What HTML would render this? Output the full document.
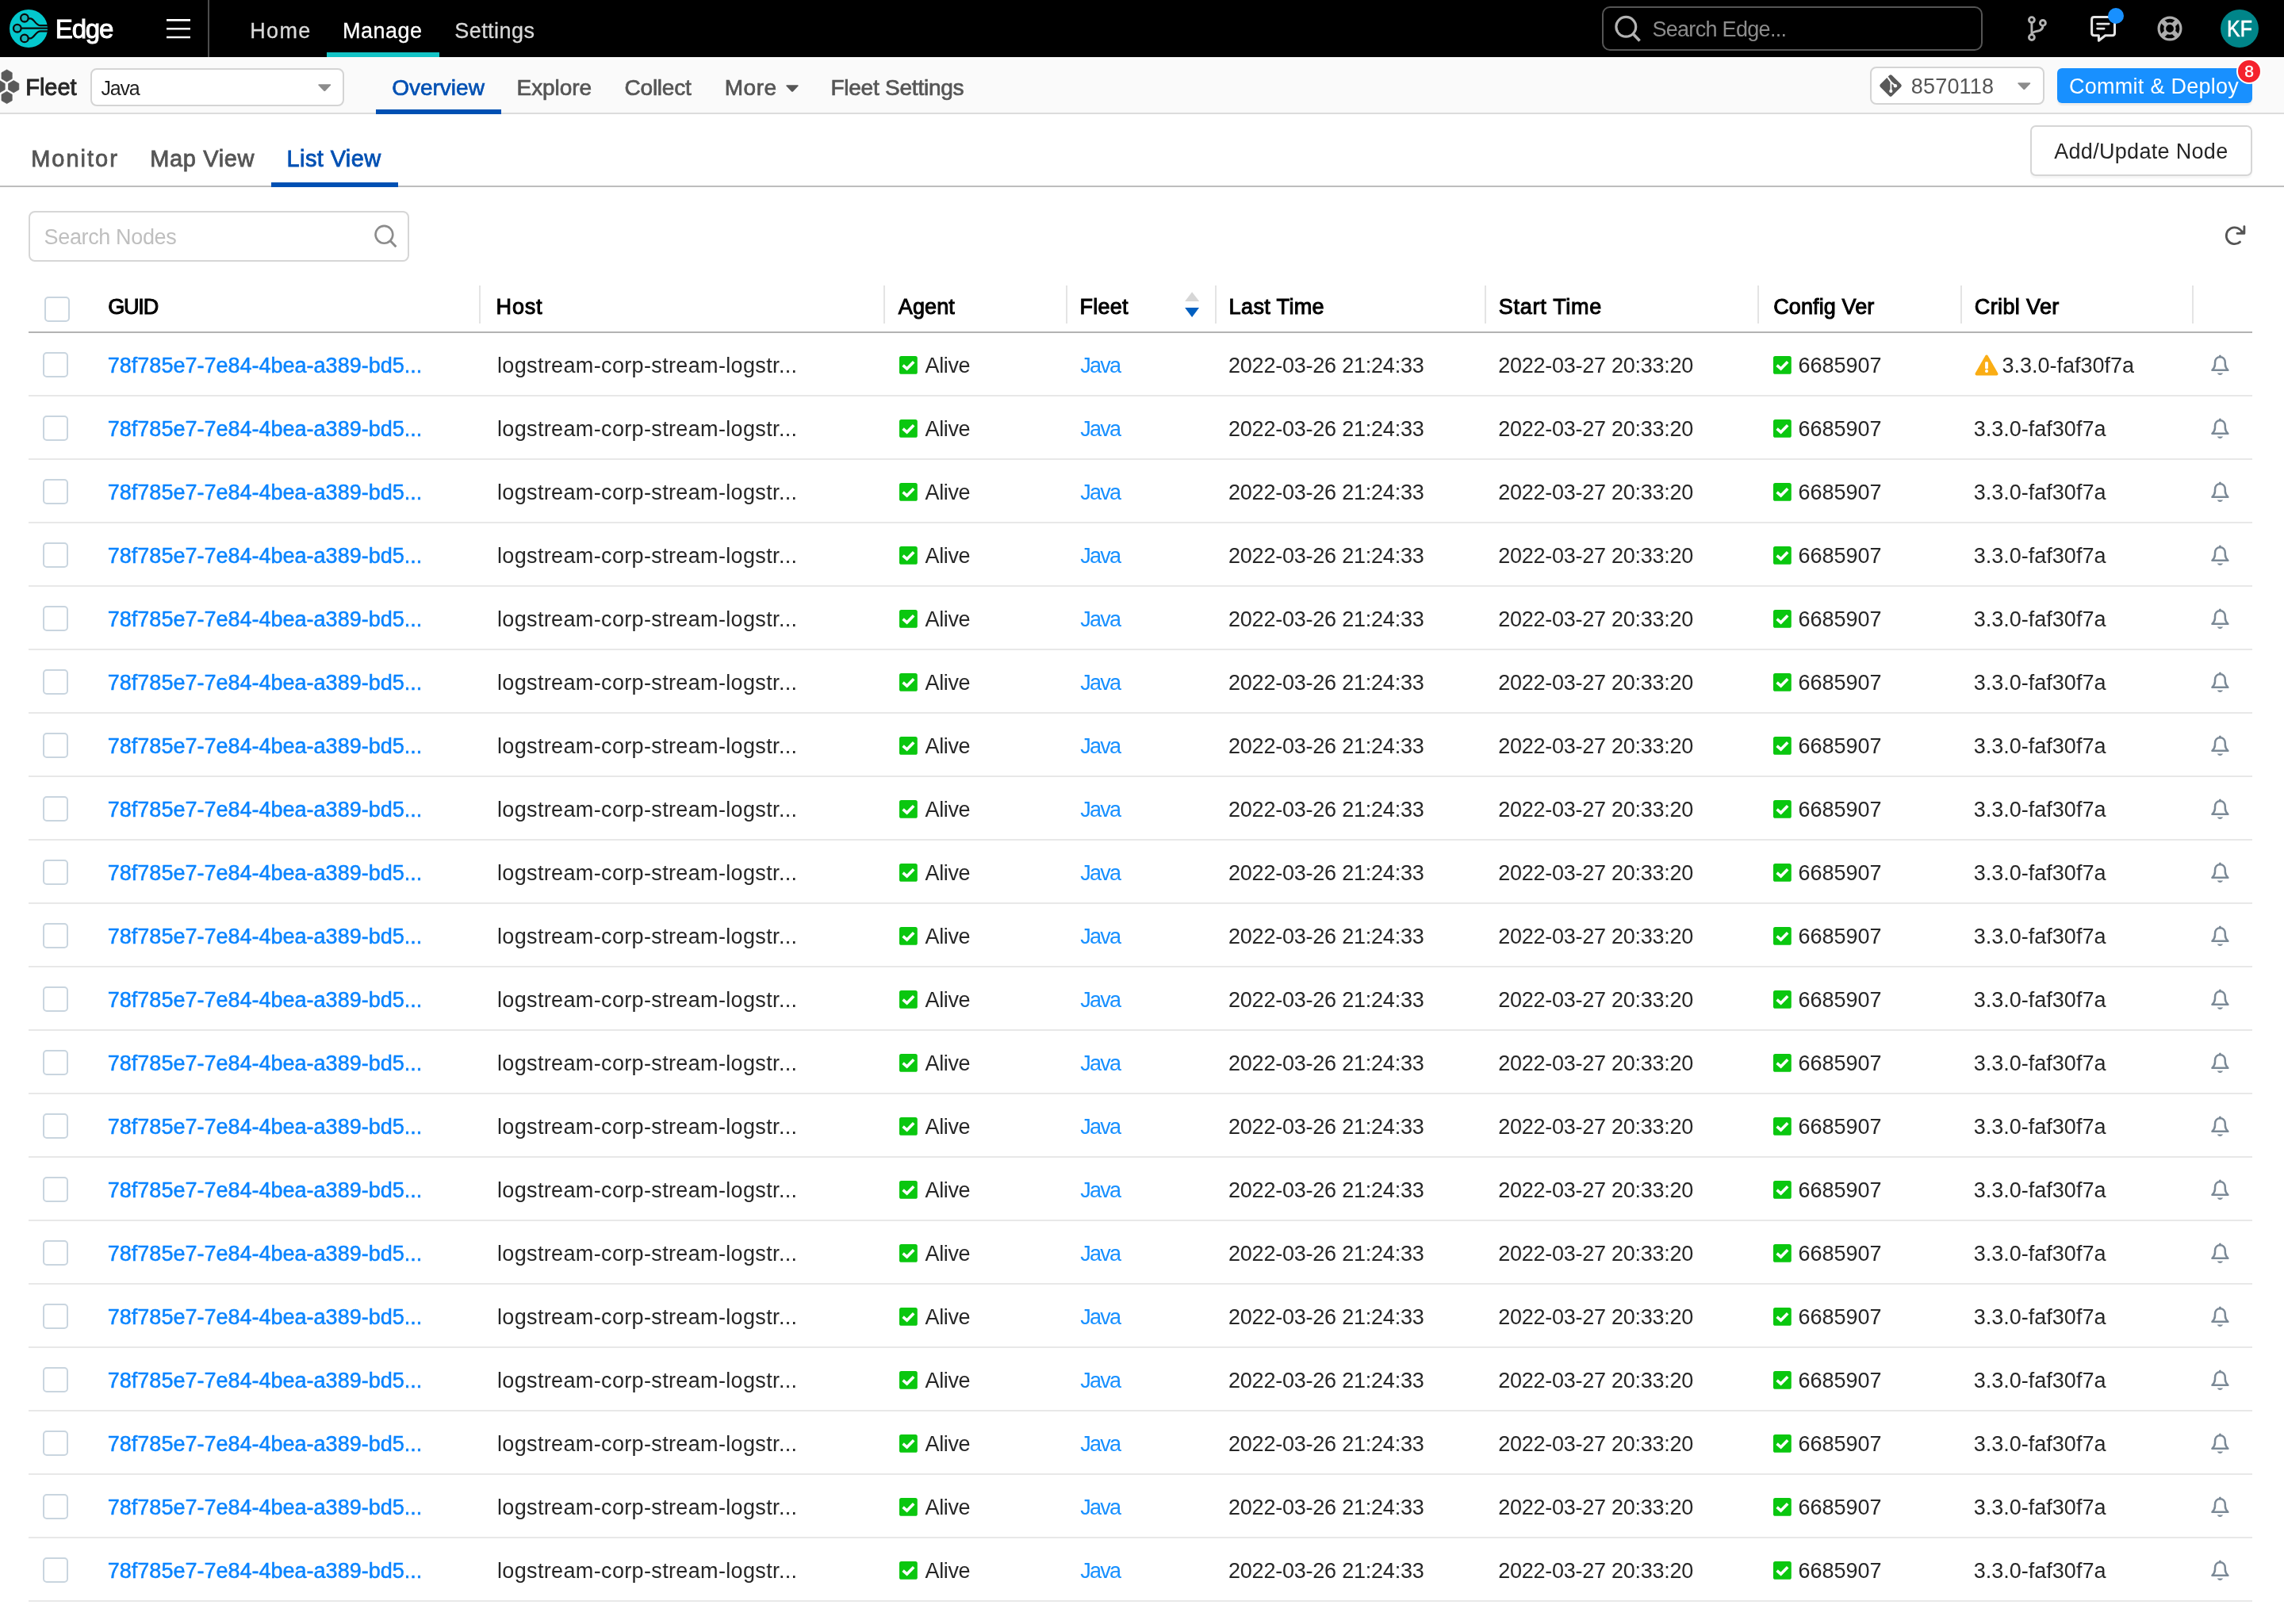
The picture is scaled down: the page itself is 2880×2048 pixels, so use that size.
<!DOCTYPE html>
<html lang="en"><head><meta charset="utf-8"><title>Edge - Fleet Java - List View</title>
<style>
html,body{margin:0;padding:0}
body{width:2880px;height:2048px;overflow:hidden;background:#fff;position:relative;font-family:"Liberation Sans",sans-serif;-webkit-font-smoothing:antialiased}
.a{position:absolute;display:block}
#topbar,#fleetbar,#tabs,#toolbar,#thead,.row{will-change:transform}
.t{position:absolute;white-space:nowrap;line-height:1;paint-order:stroke fill}
#topbar{left:0;top:0;width:2880px;height:72px;background:#000}
#fleetbar{left:0;top:72px;width:2880px;height:70px;background:#fafafa;border-bottom:2px solid #dcdcdc}
#tabs{left:0;top:144px;width:2880px;height:90px;background:#fff;border-bottom:2px solid #bdbdbd}
#toolbar{left:0;top:236px;width:2880px;height:104px}
#thead{left:36px;top:340px;width:2804px;height:78px;border-bottom:2px solid #b3b3b3}
.row{left:36px;width:2804px;height:78px;border-bottom:2px solid #e8e8e8}
.cb{width:28px;height:28px;border:2px solid #c9d5df;border-radius:5px;background:#fff}
.vd{width:2px;height:48px;top:20px;background:#e4e4e4}
.ul{height:6px}
</style></head><body>

<header id="topbar" class="a">
<svg class="a" style="left:12px;top:12px" width="48" height="48" viewBox="0 0 48 48">
<circle cx="24" cy="24" r="24" fill="#04c8cd"/>
<g fill="none" stroke="#0a0a0a" stroke-width="2.2" stroke-linecap="round">
<path d="M23.6 11.4H26.4C31 11.4 33 20.2 39 20.2H48"/>
<path d="M14.6 23.7H48"/>
<path d="M23.6 36.3H26.4C31 36.3 33 27.4 39 27.4H48"/>
</g>
<g fill="#18b4b8" stroke="#0a0a0a" stroke-width="2.3">
<circle cx="18.9" cy="10.7" r="4.8"/><circle cx="9.8" cy="23.7" r="4.8"/><circle cx="18.9" cy="36.4" r="4.8"/>
</g></svg>
<span class="t" id="t_edge" style="left:69.80px;top:20.37px;font-size:33px;color:#fff;letter-spacing:-1.167px;-webkit-text-stroke:1.0px #fff;">Edge</span>
<svg class="a" style="left:210px;top:23px" width="30" height="26" viewBox="0 0 30 26"><path d="M0 2.4H30M0 13.2H30M0 24H30" stroke="#fff" stroke-width="2.6" fill="none"/></svg>
<div class="a" style="left:262px;top:0;width:2px;height:72px;background:#4d4d4d"></div>
<nav>
<span class="t" id="t_home" style="left:315.20px;top:26.19px;font-size:27px;color:#d9d9d9;letter-spacing:1.366px;-webkit-text-stroke:0.3px #d9d9d9;">Home</span>
<span class="t" id="t_manage" style="left:432.00px;top:26.19px;font-size:27px;color:#fff;letter-spacing:0.500px;-webkit-text-stroke:0.3px #fff;">Manage</span>
<span class="t" id="t_settings" style="left:573.20px;top:26.19px;font-size:27px;color:#d9d9d9;letter-spacing:0.457px;-webkit-text-stroke:0.3px #d9d9d9;">Settings</span>
<div class="a ul" style="left:412px;top:66px;width:142px;background:#13c3c5"></div>
</nav>
<div class="a" style="left:2020px;top:8px;width:476px;height:52px;border:2px solid #555;border-radius:10px"></div>
<svg class="a" style="left:2034px;top:18px" width="38" height="38" viewBox="0 0 38 38"><circle cx="16.3" cy="15.8" r="12.4" fill="none" stroke="#b3b3b3" stroke-width="3.2"/><path d="M25 24.6L33.6 33.4" stroke="#b3b3b3" stroke-width="3.6" stroke-linecap="butt"/></svg>
<span class="t" id="t_searchedge" style="left:2083.40px;top:24.24px;font-size:27px;color:#8c8c8c;letter-spacing:-0.692px;">Search Edge...</span>
<svg class="a" style="left:2554px;top:18px" width="30" height="36" viewBox="0 0 30 36"><g fill="none" stroke="#b3b3b3" stroke-width="2.9">
<circle cx="7.9" cy="7.1" r="3.45"/><circle cx="7.9" cy="29.1" r="3.45"/><circle cx="21.9" cy="10.9" r="3.45"/>
<path d="M7.9 10.5V25.7"/><path d="M21.9 14.4C21.9 19.6 18.4 20.6 15 21.2S9 22 8 25"/></g></svg>
<svg class="a" style="left:2634px;top:18px" width="36" height="36" viewBox="0 0 36 36"><g fill="none" stroke="#e4e4e4" stroke-width="3" stroke-linejoin="round">
<path d="M6.6 3.5H29.6Q32.5 3.5 32.5 6.4V23.8Q32.5 26.7 29.6 26.7H20.6L12.4 33.2V26.7H6.6Q3.6 26.7 3.6 23.8V6.4Q3.6 3.5 6.6 3.5Z"/></g>
<path d="M10.6 12.1H25.2M10.6 18.1H19.2" stroke="#e4e4e4" stroke-width="2.7" stroke-linecap="round" fill="none"/></svg>
<div class="a" style="left:2657.6px;top:9.6px;width:20.4px;height:20.4px;border-radius:50%;background:#1890ff"></div>
<svg class="a" style="left:2719px;top:19px" width="34" height="34" viewBox="0 0 34 34"><g fill="none" stroke="#adadad">
<circle cx="17" cy="17" r="13.9" stroke-width="3.2"/><circle cx="17" cy="17" r="6.3" stroke-width="2.8"/>
<path d="M7.6 7.6L12.4 12.4M26.4 7.6L21.6 12.4M7.6 26.4L12.4 21.6M26.4 26.4L21.6 21.6" stroke-width="5.8"/></g></svg>
<div class="a" style="left:2800px;top:12px;width:48px;height:48px;border-radius:50%;background:#008589"></div>
<span class="t" id="t_kf" style="left:2808.00px;top:22.05px;font-size:29px;color:#fff;-webkit-text-stroke:0.6px #fff;transform:scaleX(0.86);transform-origin:0 50%;">KF</span>
</header>
<div id="fleetbar" class="a">
<svg class="a" style="left:0;top:14px" width="26" height="48" viewBox="0 0 26 48"><g fill="#595959" stroke="#595959" stroke-width="0.8" stroke-linejoin="round"><polygon points="8.60,1.90 15.18,5.70 15.18,13.30 8.60,17.10 2.02,13.30 2.02,5.70"/><polygon points="17.20,15.60 23.78,19.40 23.78,27.00 17.20,30.80 10.62,27.00 10.62,19.40"/><polygon points="-0.40,15.60 6.18,19.40 6.18,27.00 -0.40,30.80 -6.98,27.00 -6.98,19.40"/><polygon points="8.60,29.40 15.18,33.20 15.18,40.80 8.60,44.60 2.02,40.80 2.02,33.20"/></g></svg>
<span class="t" id="t_fleet" style="left:32.20px;top:23.90px;font-size:29px;color:#262626;-webkit-text-stroke:0.9px #262626;">Fleet</span>
<div class="a" style="left:114px;top:14px;width:316px;height:44px;border:2px solid #d4d4d4;border-radius:8px;background:#fff"></div>
<span class="t" id="t_javasel" style="left:127.40px;top:26.74px;font-size:25px;color:#1f1f1f;letter-spacing:-1.201px;">Java</span>
<svg class="a" style="left:400.9px;top:34.3px" width="16.6" height="9.2" viewBox="0 0 16.6 9.2"><path d="M1 0.3H15.600000000000001Q16.6 0.6 16.1 1.4L9.200000000000001 8.7Q8.3 9.299999999999999 7.4 8.7L0.5 1.4Q0 0.6 1 0.3Z" fill="#8c8c8c"/></svg>
<span class="t" id="t_overview" style="left:494.20px;top:25.05px;font-size:28px;color:#0050b3;letter-spacing:-0.001px;-webkit-text-stroke:0.7px #0050b3;">Overview</span>
<span class="t" id="t_explore" style="left:651.60px;top:25.05px;font-size:28px;color:#555;letter-spacing:-0.084px;-webkit-text-stroke:0.7px #555;">Explore</span>
<span class="t" id="t_collect" style="left:787.60px;top:25.05px;font-size:28px;color:#555;letter-spacing:-0.250px;-webkit-text-stroke:0.7px #555;">Collect</span>
<span class="t" id="t_more" style="left:913.80px;top:25.05px;font-size:28px;color:#555;letter-spacing:0.499px;-webkit-text-stroke:0.7px #555;">More</span>
<span class="t" id="t_fleetsettings" style="left:1047.40px;top:25.05px;font-size:28px;color:#555;letter-spacing:-0.230px;-webkit-text-stroke:0.7px #555;">Fleet Settings</span>
<svg class="a" style="left:991px;top:34.6px" width="16" height="9" viewBox="0 0 16 9"><path d="M1 0.3H15Q16 0.6 15.5 1.4L8.9 8.5Q8.0 9.1 7.1 8.5L0.5 1.4Q0 0.6 1 0.3Z" fill="#555"/></svg>
<div class="a ul" style="left:474px;top:66px;width:158px;background:#0050b3"></div>
<div class="a" style="left:2358px;top:12px;width:216px;height:44px;border:2px solid #d4d4d4;border-radius:8px;background:#fff"></div>
<svg class="a" style="left:2369px;top:21px" width="30" height="30" viewBox="0 0 30 30">
<rect x="4.6" y="4.6" width="20.8" height="20.8" rx="2.4" transform="rotate(45 15 15)" fill="#595959"/>
<g stroke="#fff" stroke-width="1.9" fill="none"><path d="M10.4 3.4L15.4 10.4V21.6"/><path d="M15.4 10.4L20.6 14.8"/></g>
<g fill="#fff"><circle cx="15.3" cy="21.9" r="2.1"/><circle cx="20.9" cy="15.2" r="2.2"/></g></svg>
<span class="t" id="t_commitno" style="left:2409.80px;top:24.34px;font-size:27px;color:#555;letter-spacing:0.184px;">8570118</span>
<svg class="a" style="left:2544.4px;top:32.2px" width="16.6" height="9.2" viewBox="0 0 16.6 9.2"><path d="M1 0.3H15.600000000000001Q16.6 0.6 16.1 1.4L9.200000000000001 8.7Q8.3 9.299999999999999 7.4 8.7L0.5 1.4Q0 0.6 1 0.3Z" fill="#8c8c8c"/></svg>
<div class="a" style="left:2594px;top:14px;width:246px;height:44px;border-radius:6px;background:#1890ff;box-shadow:0 3px 2px rgba(0,0,0,0.06)"></div>
<span class="t" id="t_commit" style="left:2609.00px;top:23.84px;font-size:27px;color:#fff;letter-spacing:0.272px;">Commit &amp; Deploy</span>
<div class="a" style="left:2820px;top:2px;width:28px;height:28px;border:2px solid #fff;border-radius:50%;background:#f5222d"></div>
<span class="t" id="t_badge" style="left:2830.30px;top:6.52px;font-size:21px;color:#fff;-webkit-text-stroke:0.4px #fff;">8</span>
</div>
<div id="tabs" class="a">
<span class="t" id="t_monitor" style="left:39.20px;top:42.05px;font-size:29px;color:#555;letter-spacing:1.999px;-webkit-text-stroke:0.8px #555;">Monitor</span>
<span class="t" id="t_mapview" style="left:189.20px;top:42.05px;font-size:29px;color:#555;letter-spacing:0.643px;-webkit-text-stroke:0.8px #555;">Map View</span>
<span class="t" id="t_listview" style="left:361.60px;top:42.05px;font-size:29px;color:#0050b3;letter-spacing:0.375px;-webkit-text-stroke:0.8px #0050b3;">List View</span>
<div class="a ul" style="left:342px;top:86px;width:160px;background:#0050b3"></div>
<div class="a" style="left:2560px;top:14px;width:276px;height:60px;border:2px solid #d6d6d6;border-radius:7px;background:#fff;box-shadow:0 3px 2px rgba(0,0,0,0.04)"></div>
<span class="t" id="t_addnode" style="left:2590.20px;top:33.74px;font-size:27px;color:#262626;letter-spacing:0.308px;">Add/Update Node</span>
</div>
<div id="toolbar" class="a">
<div class="a" style="left:36px;top:30px;width:476px;height:60px;border:2px solid #d6d6d6;border-radius:8px;background:#fff"></div>
<span class="t" id="t_searchnodes" style="left:55.60px;top:50.24px;font-size:27px;color:#bfbfbf;letter-spacing:-0.364px;">Search Nodes</span>
<svg class="a" style="left:470px;top:46px" width="32" height="32" viewBox="0 0 32 32"><circle cx="14.4" cy="13.8" r="10.9" fill="none" stroke="#8c8c8c" stroke-width="2.6"/><path d="M22.2 21.8L29.4 29.2" stroke="#8c8c8c" stroke-width="3" stroke-linecap="butt"/></svg>
<svg class="a" style="left:2803px;top:46px" width="32" height="30" viewBox="0 0 32 30"><g fill="none" stroke="#555" stroke-width="2.8" stroke-linecap="round" stroke-linejoin="round">
<path d="M24.4 11.6A10.4 10.4 0 1 0 21.5 23.1"/><path d="M26.9 3.6V12.4H18"/></g><path d="M22.8 9.4L26.9 8V12.4H21.6Z" fill="#555"/></svg>
</div>
<div id="thead" class="a">
<div class="a cb" style="left:20px;top:34px"></div>
<span class="t" id="t_h_guid" style="left:100.20px;top:33.64px;font-size:27px;color:#000;letter-spacing:-1.167px;-webkit-text-stroke:1.0px #000;">GUID</span>
<span class="t" id="t_h_host" style="left:589.60px;top:33.64px;font-size:27px;color:#000;letter-spacing:0.832px;-webkit-text-stroke:1.0px #000;">Host</span>
<span class="t" id="t_h_agent" style="left:1096.80px;top:33.64px;font-size:27px;color:#000;letter-spacing:0.125px;-webkit-text-stroke:1.0px #000;">Agent</span>
<span class="t" id="t_h_fleet" style="left:1325.40px;top:33.64px;font-size:27px;color:#000;letter-spacing:0.250px;-webkit-text-stroke:1.0px #000;">Fleet</span>
<span class="t" id="t_h_last" style="left:1513.60px;top:33.64px;font-size:27px;color:#000;letter-spacing:0.375px;-webkit-text-stroke:1.0px #000;">Last Time</span>
<span class="t" id="t_h_start" style="left:1853.80px;top:33.64px;font-size:27px;color:#000;letter-spacing:0.721px;-webkit-text-stroke:1.0px #000;">Start Time</span>
<span class="t" id="t_h_config" style="left:2200.20px;top:33.64px;font-size:27px;color:#000;letter-spacing:0.113px;-webkit-text-stroke:1.0px #000;">Config Ver</span>
<span class="t" id="t_h_cribl" style="left:2453.80px;top:33.64px;font-size:27px;color:#000;letter-spacing:0.375px;-webkit-text-stroke:1.0px #000;">Cribl Ver</span>
<div class="a vd" style="left:568px"></div>
<div class="a vd" style="left:1078px"></div>
<div class="a vd" style="left:1308px"></div>
<div class="a vd" style="left:1496px"></div>
<div class="a vd" style="left:1836px"></div>
<div class="a vd" style="left:2180px"></div>
<div class="a vd" style="left:2436px"></div>
<div class="a vd" style="left:2728px"></div>
<svg class="a" style="left:1458px;top:28px" width="18.2" height="34" viewBox="0 0 18.2 34"><path d="M9.1 0.2L18.1 11.9H0.1Z" fill="#d6d6d6"/><path d="M9.1 31.9L18.1 20H0.1Z" fill="#005fc0"/></svg>
</div>
<div class="a row" style="top:420px">
<div class="a cb" style="left:18px;top:24px"></div>
<span class="t" id="t_r_guid" style="left:99.80px;top:28.19px;font-size:27px;color:#0a84ff;letter-spacing:0.004px;-webkit-text-stroke:0.5px #0a84ff;">78f785e7-7e84-4bea-a389-bd5...</span>
<span class="t" id="t_r_host" style="left:591.00px;top:28.44px;font-size:27px;color:#262626;letter-spacing:0.350px;">logstream-corp-stream-logstr...</span>
<svg class="a ck" style="left:1098px;top:28.80000000000001px" width="23" height="23" viewBox="0 0 23 23"><rect x="0" y="0" width="22.8" height="22.8" rx="2.6" fill="#0ac70f"/><path d="M4.6 11.6L9.6 16L18.2 7.2" fill="none" stroke="#fff" stroke-width="3.6" stroke-linecap="butt" stroke-linejoin="miter"/></svg>
<span class="t" id="t_r_alive" style="left:1130.60px;top:28.44px;font-size:27px;color:#262626;letter-spacing:-0.400px;">Alive</span>
<span class="t" id="t_r_java" style="left:1326.20px;top:28.44px;font-size:27px;color:#1890ff;letter-spacing:-1.700px;">Java</span>
<span class="t" id="t_r_last" style="left:1513.00px;top:28.44px;font-size:27px;color:#262626;letter-spacing:-0.222px;">2022-03-26 21:24:33</span>
<span class="t" id="t_r_start" style="left:1853.20px;top:28.44px;font-size:27px;color:#262626;letter-spacing:-0.261px;">2022-03-27 20:33:20</span>
<svg class="a ck" style="left:2200px;top:28.80000000000001px" width="23" height="23" viewBox="0 0 23 23"><rect x="0" y="0" width="22.8" height="22.8" rx="2.6" fill="#0ac70f"/><path d="M4.6 11.6L9.6 16L18.2 7.2" fill="none" stroke="#fff" stroke-width="3.6" stroke-linecap="butt" stroke-linejoin="miter"/></svg>
<span class="t" id="t_r_cfg" style="left:2231.60px;top:28.44px;font-size:27px;color:#262626;letter-spacing:-0.050px;">6685907</span>
<svg class="a" style="left:2453.6px;top:26.80000000000001px" width="30" height="27" viewBox="0 0 30 27"><path d="M13.4 1.6Q15 -0.6 16.6 1.6L29.2 23.4Q30.2 26.2 27.6 26.4H2.4Q-0.2 26.2 0.8 23.4Z" fill="#faad14"/><rect x="13.1" y="9.2" width="3.8" height="9" rx="1.2" fill="#fff"/><circle cx="15" cy="21" r="2" fill="#fff"/></svg>
<span class="t" id="t_r_ver1" style="left:2488.40px;top:28.44px;font-size:27px;color:#262626;">3.3.0-faf30f7a</span>
<svg class="a" style="left:2750px;top:25px" width="27" height="30" viewBox="0 0 27 30"><path d="M3.4 21.8C5.6 19.6 7 17.8 7 14.6V12.2C7 7.8 9.6 5.2 13.4 5.2S19.8 7.8 19.8 12.2V14.6C19.8 17.8 21.2 19.6 23.4 21.8Z" fill="none" stroke="#7b8996" stroke-width="2.5" stroke-linejoin="round"/><circle cx="13.4" cy="3.9" r="1.5" fill="#7b8996"/><path d="M9.6 25.4H17.2Q13.4 30.4 9.6 25.4Z" fill="#7b8996"/></svg>
</div>
<div class="a row" style="top:500px">
<div class="a cb" style="left:18px;top:24px"></div>
<span class="t" style="left:99.80px;top:28.19px;font-size:27px;color:#0a84ff;letter-spacing:0.004px;-webkit-text-stroke:0.5px #0a84ff;">78f785e7-7e84-4bea-a389-bd5...</span>
<span class="t" style="left:591.00px;top:28.44px;font-size:27px;color:#262626;letter-spacing:0.350px;">logstream-corp-stream-logstr...</span>
<svg class="a ck" style="left:1098px;top:28.80000000000001px" width="23" height="23" viewBox="0 0 23 23"><rect x="0" y="0" width="22.8" height="22.8" rx="2.6" fill="#0ac70f"/><path d="M4.6 11.6L9.6 16L18.2 7.2" fill="none" stroke="#fff" stroke-width="3.6" stroke-linecap="butt" stroke-linejoin="miter"/></svg>
<span class="t" style="left:1130.60px;top:28.44px;font-size:27px;color:#262626;letter-spacing:-0.400px;">Alive</span>
<span class="t" style="left:1326.20px;top:28.44px;font-size:27px;color:#1890ff;letter-spacing:-1.700px;">Java</span>
<span class="t" style="left:1513.00px;top:28.44px;font-size:27px;color:#262626;letter-spacing:-0.222px;">2022-03-26 21:24:33</span>
<span class="t" style="left:1853.20px;top:28.44px;font-size:27px;color:#262626;letter-spacing:-0.261px;">2022-03-27 20:33:20</span>
<svg class="a ck" style="left:2200px;top:28.80000000000001px" width="23" height="23" viewBox="0 0 23 23"><rect x="0" y="0" width="22.8" height="22.8" rx="2.6" fill="#0ac70f"/><path d="M4.6 11.6L9.6 16L18.2 7.2" fill="none" stroke="#fff" stroke-width="3.6" stroke-linecap="butt" stroke-linejoin="miter"/></svg>
<span class="t" style="left:2231.60px;top:28.44px;font-size:27px;color:#262626;letter-spacing:-0.050px;">6685907</span>
<span class="t" id="t_r_ver" style="left:2452.80px;top:28.44px;font-size:27px;color:#262626;">3.3.0-faf30f7a</span>
<svg class="a" style="left:2750px;top:25px" width="27" height="30" viewBox="0 0 27 30"><path d="M3.4 21.8C5.6 19.6 7 17.8 7 14.6V12.2C7 7.8 9.6 5.2 13.4 5.2S19.8 7.8 19.8 12.2V14.6C19.8 17.8 21.2 19.6 23.4 21.8Z" fill="none" stroke="#7b8996" stroke-width="2.5" stroke-linejoin="round"/><circle cx="13.4" cy="3.9" r="1.5" fill="#7b8996"/><path d="M9.6 25.4H17.2Q13.4 30.4 9.6 25.4Z" fill="#7b8996"/></svg>
</div>
<div class="a row" style="top:580px">
<div class="a cb" style="left:18px;top:24px"></div>
<span class="t" style="left:99.80px;top:28.19px;font-size:27px;color:#0a84ff;letter-spacing:0.004px;-webkit-text-stroke:0.5px #0a84ff;">78f785e7-7e84-4bea-a389-bd5...</span>
<span class="t" style="left:591.00px;top:28.44px;font-size:27px;color:#262626;letter-spacing:0.350px;">logstream-corp-stream-logstr...</span>
<svg class="a ck" style="left:1098px;top:28.80000000000001px" width="23" height="23" viewBox="0 0 23 23"><rect x="0" y="0" width="22.8" height="22.8" rx="2.6" fill="#0ac70f"/><path d="M4.6 11.6L9.6 16L18.2 7.2" fill="none" stroke="#fff" stroke-width="3.6" stroke-linecap="butt" stroke-linejoin="miter"/></svg>
<span class="t" style="left:1130.60px;top:28.44px;font-size:27px;color:#262626;letter-spacing:-0.400px;">Alive</span>
<span class="t" style="left:1326.20px;top:28.44px;font-size:27px;color:#1890ff;letter-spacing:-1.700px;">Java</span>
<span class="t" style="left:1513.00px;top:28.44px;font-size:27px;color:#262626;letter-spacing:-0.222px;">2022-03-26 21:24:33</span>
<span class="t" style="left:1853.20px;top:28.44px;font-size:27px;color:#262626;letter-spacing:-0.261px;">2022-03-27 20:33:20</span>
<svg class="a ck" style="left:2200px;top:28.80000000000001px" width="23" height="23" viewBox="0 0 23 23"><rect x="0" y="0" width="22.8" height="22.8" rx="2.6" fill="#0ac70f"/><path d="M4.6 11.6L9.6 16L18.2 7.2" fill="none" stroke="#fff" stroke-width="3.6" stroke-linecap="butt" stroke-linejoin="miter"/></svg>
<span class="t" style="left:2231.60px;top:28.44px;font-size:27px;color:#262626;letter-spacing:-0.050px;">6685907</span>
<span class="t" style="left:2452.80px;top:28.44px;font-size:27px;color:#262626;">3.3.0-faf30f7a</span>
<svg class="a" style="left:2750px;top:25px" width="27" height="30" viewBox="0 0 27 30"><path d="M3.4 21.8C5.6 19.6 7 17.8 7 14.6V12.2C7 7.8 9.6 5.2 13.4 5.2S19.8 7.8 19.8 12.2V14.6C19.8 17.8 21.2 19.6 23.4 21.8Z" fill="none" stroke="#7b8996" stroke-width="2.5" stroke-linejoin="round"/><circle cx="13.4" cy="3.9" r="1.5" fill="#7b8996"/><path d="M9.6 25.4H17.2Q13.4 30.4 9.6 25.4Z" fill="#7b8996"/></svg>
</div>
<div class="a row" style="top:660px">
<div class="a cb" style="left:18px;top:24px"></div>
<span class="t" style="left:99.80px;top:28.19px;font-size:27px;color:#0a84ff;letter-spacing:0.004px;-webkit-text-stroke:0.5px #0a84ff;">78f785e7-7e84-4bea-a389-bd5...</span>
<span class="t" style="left:591.00px;top:28.44px;font-size:27px;color:#262626;letter-spacing:0.350px;">logstream-corp-stream-logstr...</span>
<svg class="a ck" style="left:1098px;top:28.80000000000001px" width="23" height="23" viewBox="0 0 23 23"><rect x="0" y="0" width="22.8" height="22.8" rx="2.6" fill="#0ac70f"/><path d="M4.6 11.6L9.6 16L18.2 7.2" fill="none" stroke="#fff" stroke-width="3.6" stroke-linecap="butt" stroke-linejoin="miter"/></svg>
<span class="t" style="left:1130.60px;top:28.44px;font-size:27px;color:#262626;letter-spacing:-0.400px;">Alive</span>
<span class="t" style="left:1326.20px;top:28.44px;font-size:27px;color:#1890ff;letter-spacing:-1.700px;">Java</span>
<span class="t" style="left:1513.00px;top:28.44px;font-size:27px;color:#262626;letter-spacing:-0.222px;">2022-03-26 21:24:33</span>
<span class="t" style="left:1853.20px;top:28.44px;font-size:27px;color:#262626;letter-spacing:-0.261px;">2022-03-27 20:33:20</span>
<svg class="a ck" style="left:2200px;top:28.80000000000001px" width="23" height="23" viewBox="0 0 23 23"><rect x="0" y="0" width="22.8" height="22.8" rx="2.6" fill="#0ac70f"/><path d="M4.6 11.6L9.6 16L18.2 7.2" fill="none" stroke="#fff" stroke-width="3.6" stroke-linecap="butt" stroke-linejoin="miter"/></svg>
<span class="t" style="left:2231.60px;top:28.44px;font-size:27px;color:#262626;letter-spacing:-0.050px;">6685907</span>
<span class="t" style="left:2452.80px;top:28.44px;font-size:27px;color:#262626;">3.3.0-faf30f7a</span>
<svg class="a" style="left:2750px;top:25px" width="27" height="30" viewBox="0 0 27 30"><path d="M3.4 21.8C5.6 19.6 7 17.8 7 14.6V12.2C7 7.8 9.6 5.2 13.4 5.2S19.8 7.8 19.8 12.2V14.6C19.8 17.8 21.2 19.6 23.4 21.8Z" fill="none" stroke="#7b8996" stroke-width="2.5" stroke-linejoin="round"/><circle cx="13.4" cy="3.9" r="1.5" fill="#7b8996"/><path d="M9.6 25.4H17.2Q13.4 30.4 9.6 25.4Z" fill="#7b8996"/></svg>
</div>
<div class="a row" style="top:740px">
<div class="a cb" style="left:18px;top:24px"></div>
<span class="t" style="left:99.80px;top:28.19px;font-size:27px;color:#0a84ff;letter-spacing:0.004px;-webkit-text-stroke:0.5px #0a84ff;">78f785e7-7e84-4bea-a389-bd5...</span>
<span class="t" style="left:591.00px;top:28.44px;font-size:27px;color:#262626;letter-spacing:0.350px;">logstream-corp-stream-logstr...</span>
<svg class="a ck" style="left:1098px;top:28.80000000000001px" width="23" height="23" viewBox="0 0 23 23"><rect x="0" y="0" width="22.8" height="22.8" rx="2.6" fill="#0ac70f"/><path d="M4.6 11.6L9.6 16L18.2 7.2" fill="none" stroke="#fff" stroke-width="3.6" stroke-linecap="butt" stroke-linejoin="miter"/></svg>
<span class="t" style="left:1130.60px;top:28.44px;font-size:27px;color:#262626;letter-spacing:-0.400px;">Alive</span>
<span class="t" style="left:1326.20px;top:28.44px;font-size:27px;color:#1890ff;letter-spacing:-1.700px;">Java</span>
<span class="t" style="left:1513.00px;top:28.44px;font-size:27px;color:#262626;letter-spacing:-0.222px;">2022-03-26 21:24:33</span>
<span class="t" style="left:1853.20px;top:28.44px;font-size:27px;color:#262626;letter-spacing:-0.261px;">2022-03-27 20:33:20</span>
<svg class="a ck" style="left:2200px;top:28.80000000000001px" width="23" height="23" viewBox="0 0 23 23"><rect x="0" y="0" width="22.8" height="22.8" rx="2.6" fill="#0ac70f"/><path d="M4.6 11.6L9.6 16L18.2 7.2" fill="none" stroke="#fff" stroke-width="3.6" stroke-linecap="butt" stroke-linejoin="miter"/></svg>
<span class="t" style="left:2231.60px;top:28.44px;font-size:27px;color:#262626;letter-spacing:-0.050px;">6685907</span>
<span class="t" style="left:2452.80px;top:28.44px;font-size:27px;color:#262626;">3.3.0-faf30f7a</span>
<svg class="a" style="left:2750px;top:25px" width="27" height="30" viewBox="0 0 27 30"><path d="M3.4 21.8C5.6 19.6 7 17.8 7 14.6V12.2C7 7.8 9.6 5.2 13.4 5.2S19.8 7.8 19.8 12.2V14.6C19.8 17.8 21.2 19.6 23.4 21.8Z" fill="none" stroke="#7b8996" stroke-width="2.5" stroke-linejoin="round"/><circle cx="13.4" cy="3.9" r="1.5" fill="#7b8996"/><path d="M9.6 25.4H17.2Q13.4 30.4 9.6 25.4Z" fill="#7b8996"/></svg>
</div>
<div class="a row" style="top:820px">
<div class="a cb" style="left:18px;top:24px"></div>
<span class="t" style="left:99.80px;top:28.19px;font-size:27px;color:#0a84ff;letter-spacing:0.004px;-webkit-text-stroke:0.5px #0a84ff;">78f785e7-7e84-4bea-a389-bd5...</span>
<span class="t" style="left:591.00px;top:28.44px;font-size:27px;color:#262626;letter-spacing:0.350px;">logstream-corp-stream-logstr...</span>
<svg class="a ck" style="left:1098px;top:28.80000000000001px" width="23" height="23" viewBox="0 0 23 23"><rect x="0" y="0" width="22.8" height="22.8" rx="2.6" fill="#0ac70f"/><path d="M4.6 11.6L9.6 16L18.2 7.2" fill="none" stroke="#fff" stroke-width="3.6" stroke-linecap="butt" stroke-linejoin="miter"/></svg>
<span class="t" style="left:1130.60px;top:28.44px;font-size:27px;color:#262626;letter-spacing:-0.400px;">Alive</span>
<span class="t" style="left:1326.20px;top:28.44px;font-size:27px;color:#1890ff;letter-spacing:-1.700px;">Java</span>
<span class="t" style="left:1513.00px;top:28.44px;font-size:27px;color:#262626;letter-spacing:-0.222px;">2022-03-26 21:24:33</span>
<span class="t" style="left:1853.20px;top:28.44px;font-size:27px;color:#262626;letter-spacing:-0.261px;">2022-03-27 20:33:20</span>
<svg class="a ck" style="left:2200px;top:28.80000000000001px" width="23" height="23" viewBox="0 0 23 23"><rect x="0" y="0" width="22.8" height="22.8" rx="2.6" fill="#0ac70f"/><path d="M4.6 11.6L9.6 16L18.2 7.2" fill="none" stroke="#fff" stroke-width="3.6" stroke-linecap="butt" stroke-linejoin="miter"/></svg>
<span class="t" style="left:2231.60px;top:28.44px;font-size:27px;color:#262626;letter-spacing:-0.050px;">6685907</span>
<span class="t" style="left:2452.80px;top:28.44px;font-size:27px;color:#262626;">3.3.0-faf30f7a</span>
<svg class="a" style="left:2750px;top:25px" width="27" height="30" viewBox="0 0 27 30"><path d="M3.4 21.8C5.6 19.6 7 17.8 7 14.6V12.2C7 7.8 9.6 5.2 13.4 5.2S19.8 7.8 19.8 12.2V14.6C19.8 17.8 21.2 19.6 23.4 21.8Z" fill="none" stroke="#7b8996" stroke-width="2.5" stroke-linejoin="round"/><circle cx="13.4" cy="3.9" r="1.5" fill="#7b8996"/><path d="M9.6 25.4H17.2Q13.4 30.4 9.6 25.4Z" fill="#7b8996"/></svg>
</div>
<div class="a row" style="top:900px">
<div class="a cb" style="left:18px;top:24px"></div>
<span class="t" style="left:99.80px;top:28.19px;font-size:27px;color:#0a84ff;letter-spacing:0.004px;-webkit-text-stroke:0.5px #0a84ff;">78f785e7-7e84-4bea-a389-bd5...</span>
<span class="t" style="left:591.00px;top:28.44px;font-size:27px;color:#262626;letter-spacing:0.350px;">logstream-corp-stream-logstr...</span>
<svg class="a ck" style="left:1098px;top:28.80000000000001px" width="23" height="23" viewBox="0 0 23 23"><rect x="0" y="0" width="22.8" height="22.8" rx="2.6" fill="#0ac70f"/><path d="M4.6 11.6L9.6 16L18.2 7.2" fill="none" stroke="#fff" stroke-width="3.6" stroke-linecap="butt" stroke-linejoin="miter"/></svg>
<span class="t" style="left:1130.60px;top:28.44px;font-size:27px;color:#262626;letter-spacing:-0.400px;">Alive</span>
<span class="t" style="left:1326.20px;top:28.44px;font-size:27px;color:#1890ff;letter-spacing:-1.700px;">Java</span>
<span class="t" style="left:1513.00px;top:28.44px;font-size:27px;color:#262626;letter-spacing:-0.222px;">2022-03-26 21:24:33</span>
<span class="t" style="left:1853.20px;top:28.44px;font-size:27px;color:#262626;letter-spacing:-0.261px;">2022-03-27 20:33:20</span>
<svg class="a ck" style="left:2200px;top:28.80000000000001px" width="23" height="23" viewBox="0 0 23 23"><rect x="0" y="0" width="22.8" height="22.8" rx="2.6" fill="#0ac70f"/><path d="M4.6 11.6L9.6 16L18.2 7.2" fill="none" stroke="#fff" stroke-width="3.6" stroke-linecap="butt" stroke-linejoin="miter"/></svg>
<span class="t" style="left:2231.60px;top:28.44px;font-size:27px;color:#262626;letter-spacing:-0.050px;">6685907</span>
<span class="t" style="left:2452.80px;top:28.44px;font-size:27px;color:#262626;">3.3.0-faf30f7a</span>
<svg class="a" style="left:2750px;top:25px" width="27" height="30" viewBox="0 0 27 30"><path d="M3.4 21.8C5.6 19.6 7 17.8 7 14.6V12.2C7 7.8 9.6 5.2 13.4 5.2S19.8 7.8 19.8 12.2V14.6C19.8 17.8 21.2 19.6 23.4 21.8Z" fill="none" stroke="#7b8996" stroke-width="2.5" stroke-linejoin="round"/><circle cx="13.4" cy="3.9" r="1.5" fill="#7b8996"/><path d="M9.6 25.4H17.2Q13.4 30.4 9.6 25.4Z" fill="#7b8996"/></svg>
</div>
<div class="a row" style="top:980px">
<div class="a cb" style="left:18px;top:24px"></div>
<span class="t" style="left:99.80px;top:28.19px;font-size:27px;color:#0a84ff;letter-spacing:0.004px;-webkit-text-stroke:0.5px #0a84ff;">78f785e7-7e84-4bea-a389-bd5...</span>
<span class="t" style="left:591.00px;top:28.44px;font-size:27px;color:#262626;letter-spacing:0.350px;">logstream-corp-stream-logstr...</span>
<svg class="a ck" style="left:1098px;top:28.80000000000001px" width="23" height="23" viewBox="0 0 23 23"><rect x="0" y="0" width="22.8" height="22.8" rx="2.6" fill="#0ac70f"/><path d="M4.6 11.6L9.6 16L18.2 7.2" fill="none" stroke="#fff" stroke-width="3.6" stroke-linecap="butt" stroke-linejoin="miter"/></svg>
<span class="t" style="left:1130.60px;top:28.44px;font-size:27px;color:#262626;letter-spacing:-0.400px;">Alive</span>
<span class="t" style="left:1326.20px;top:28.44px;font-size:27px;color:#1890ff;letter-spacing:-1.700px;">Java</span>
<span class="t" style="left:1513.00px;top:28.44px;font-size:27px;color:#262626;letter-spacing:-0.222px;">2022-03-26 21:24:33</span>
<span class="t" style="left:1853.20px;top:28.44px;font-size:27px;color:#262626;letter-spacing:-0.261px;">2022-03-27 20:33:20</span>
<svg class="a ck" style="left:2200px;top:28.80000000000001px" width="23" height="23" viewBox="0 0 23 23"><rect x="0" y="0" width="22.8" height="22.8" rx="2.6" fill="#0ac70f"/><path d="M4.6 11.6L9.6 16L18.2 7.2" fill="none" stroke="#fff" stroke-width="3.6" stroke-linecap="butt" stroke-linejoin="miter"/></svg>
<span class="t" style="left:2231.60px;top:28.44px;font-size:27px;color:#262626;letter-spacing:-0.050px;">6685907</span>
<span class="t" style="left:2452.80px;top:28.44px;font-size:27px;color:#262626;">3.3.0-faf30f7a</span>
<svg class="a" style="left:2750px;top:25px" width="27" height="30" viewBox="0 0 27 30"><path d="M3.4 21.8C5.6 19.6 7 17.8 7 14.6V12.2C7 7.8 9.6 5.2 13.4 5.2S19.8 7.8 19.8 12.2V14.6C19.8 17.8 21.2 19.6 23.4 21.8Z" fill="none" stroke="#7b8996" stroke-width="2.5" stroke-linejoin="round"/><circle cx="13.4" cy="3.9" r="1.5" fill="#7b8996"/><path d="M9.6 25.4H17.2Q13.4 30.4 9.6 25.4Z" fill="#7b8996"/></svg>
</div>
<div class="a row" style="top:1060px">
<div class="a cb" style="left:18px;top:24px"></div>
<span class="t" style="left:99.80px;top:28.19px;font-size:27px;color:#0a84ff;letter-spacing:0.004px;-webkit-text-stroke:0.5px #0a84ff;">78f785e7-7e84-4bea-a389-bd5...</span>
<span class="t" style="left:591.00px;top:28.44px;font-size:27px;color:#262626;letter-spacing:0.350px;">logstream-corp-stream-logstr...</span>
<svg class="a ck" style="left:1098px;top:28.80000000000001px" width="23" height="23" viewBox="0 0 23 23"><rect x="0" y="0" width="22.8" height="22.8" rx="2.6" fill="#0ac70f"/><path d="M4.6 11.6L9.6 16L18.2 7.2" fill="none" stroke="#fff" stroke-width="3.6" stroke-linecap="butt" stroke-linejoin="miter"/></svg>
<span class="t" style="left:1130.60px;top:28.44px;font-size:27px;color:#262626;letter-spacing:-0.400px;">Alive</span>
<span class="t" style="left:1326.20px;top:28.44px;font-size:27px;color:#1890ff;letter-spacing:-1.700px;">Java</span>
<span class="t" style="left:1513.00px;top:28.44px;font-size:27px;color:#262626;letter-spacing:-0.222px;">2022-03-26 21:24:33</span>
<span class="t" style="left:1853.20px;top:28.44px;font-size:27px;color:#262626;letter-spacing:-0.261px;">2022-03-27 20:33:20</span>
<svg class="a ck" style="left:2200px;top:28.80000000000001px" width="23" height="23" viewBox="0 0 23 23"><rect x="0" y="0" width="22.8" height="22.8" rx="2.6" fill="#0ac70f"/><path d="M4.6 11.6L9.6 16L18.2 7.2" fill="none" stroke="#fff" stroke-width="3.6" stroke-linecap="butt" stroke-linejoin="miter"/></svg>
<span class="t" style="left:2231.60px;top:28.44px;font-size:27px;color:#262626;letter-spacing:-0.050px;">6685907</span>
<span class="t" style="left:2452.80px;top:28.44px;font-size:27px;color:#262626;">3.3.0-faf30f7a</span>
<svg class="a" style="left:2750px;top:25px" width="27" height="30" viewBox="0 0 27 30"><path d="M3.4 21.8C5.6 19.6 7 17.8 7 14.6V12.2C7 7.8 9.6 5.2 13.4 5.2S19.8 7.8 19.8 12.2V14.6C19.8 17.8 21.2 19.6 23.4 21.8Z" fill="none" stroke="#7b8996" stroke-width="2.5" stroke-linejoin="round"/><circle cx="13.4" cy="3.9" r="1.5" fill="#7b8996"/><path d="M9.6 25.4H17.2Q13.4 30.4 9.6 25.4Z" fill="#7b8996"/></svg>
</div>
<div class="a row" style="top:1140px">
<div class="a cb" style="left:18px;top:24px"></div>
<span class="t" style="left:99.80px;top:28.19px;font-size:27px;color:#0a84ff;letter-spacing:0.004px;-webkit-text-stroke:0.5px #0a84ff;">78f785e7-7e84-4bea-a389-bd5...</span>
<span class="t" style="left:591.00px;top:28.44px;font-size:27px;color:#262626;letter-spacing:0.350px;">logstream-corp-stream-logstr...</span>
<svg class="a ck" style="left:1098px;top:28.80000000000001px" width="23" height="23" viewBox="0 0 23 23"><rect x="0" y="0" width="22.8" height="22.8" rx="2.6" fill="#0ac70f"/><path d="M4.6 11.6L9.6 16L18.2 7.2" fill="none" stroke="#fff" stroke-width="3.6" stroke-linecap="butt" stroke-linejoin="miter"/></svg>
<span class="t" style="left:1130.60px;top:28.44px;font-size:27px;color:#262626;letter-spacing:-0.400px;">Alive</span>
<span class="t" style="left:1326.20px;top:28.44px;font-size:27px;color:#1890ff;letter-spacing:-1.700px;">Java</span>
<span class="t" style="left:1513.00px;top:28.44px;font-size:27px;color:#262626;letter-spacing:-0.222px;">2022-03-26 21:24:33</span>
<span class="t" style="left:1853.20px;top:28.44px;font-size:27px;color:#262626;letter-spacing:-0.261px;">2022-03-27 20:33:20</span>
<svg class="a ck" style="left:2200px;top:28.80000000000001px" width="23" height="23" viewBox="0 0 23 23"><rect x="0" y="0" width="22.8" height="22.8" rx="2.6" fill="#0ac70f"/><path d="M4.6 11.6L9.6 16L18.2 7.2" fill="none" stroke="#fff" stroke-width="3.6" stroke-linecap="butt" stroke-linejoin="miter"/></svg>
<span class="t" style="left:2231.60px;top:28.44px;font-size:27px;color:#262626;letter-spacing:-0.050px;">6685907</span>
<span class="t" style="left:2452.80px;top:28.44px;font-size:27px;color:#262626;">3.3.0-faf30f7a</span>
<svg class="a" style="left:2750px;top:25px" width="27" height="30" viewBox="0 0 27 30"><path d="M3.4 21.8C5.6 19.6 7 17.8 7 14.6V12.2C7 7.8 9.6 5.2 13.4 5.2S19.8 7.8 19.8 12.2V14.6C19.8 17.8 21.2 19.6 23.4 21.8Z" fill="none" stroke="#7b8996" stroke-width="2.5" stroke-linejoin="round"/><circle cx="13.4" cy="3.9" r="1.5" fill="#7b8996"/><path d="M9.6 25.4H17.2Q13.4 30.4 9.6 25.4Z" fill="#7b8996"/></svg>
</div>
<div class="a row" style="top:1220px">
<div class="a cb" style="left:18px;top:24px"></div>
<span class="t" style="left:99.80px;top:28.19px;font-size:27px;color:#0a84ff;letter-spacing:0.004px;-webkit-text-stroke:0.5px #0a84ff;">78f785e7-7e84-4bea-a389-bd5...</span>
<span class="t" style="left:591.00px;top:28.44px;font-size:27px;color:#262626;letter-spacing:0.350px;">logstream-corp-stream-logstr...</span>
<svg class="a ck" style="left:1098px;top:28.80000000000001px" width="23" height="23" viewBox="0 0 23 23"><rect x="0" y="0" width="22.8" height="22.8" rx="2.6" fill="#0ac70f"/><path d="M4.6 11.6L9.6 16L18.2 7.2" fill="none" stroke="#fff" stroke-width="3.6" stroke-linecap="butt" stroke-linejoin="miter"/></svg>
<span class="t" style="left:1130.60px;top:28.44px;font-size:27px;color:#262626;letter-spacing:-0.400px;">Alive</span>
<span class="t" style="left:1326.20px;top:28.44px;font-size:27px;color:#1890ff;letter-spacing:-1.700px;">Java</span>
<span class="t" style="left:1513.00px;top:28.44px;font-size:27px;color:#262626;letter-spacing:-0.222px;">2022-03-26 21:24:33</span>
<span class="t" style="left:1853.20px;top:28.44px;font-size:27px;color:#262626;letter-spacing:-0.261px;">2022-03-27 20:33:20</span>
<svg class="a ck" style="left:2200px;top:28.80000000000001px" width="23" height="23" viewBox="0 0 23 23"><rect x="0" y="0" width="22.8" height="22.8" rx="2.6" fill="#0ac70f"/><path d="M4.6 11.6L9.6 16L18.2 7.2" fill="none" stroke="#fff" stroke-width="3.6" stroke-linecap="butt" stroke-linejoin="miter"/></svg>
<span class="t" style="left:2231.60px;top:28.44px;font-size:27px;color:#262626;letter-spacing:-0.050px;">6685907</span>
<span class="t" style="left:2452.80px;top:28.44px;font-size:27px;color:#262626;">3.3.0-faf30f7a</span>
<svg class="a" style="left:2750px;top:25px" width="27" height="30" viewBox="0 0 27 30"><path d="M3.4 21.8C5.6 19.6 7 17.8 7 14.6V12.2C7 7.8 9.6 5.2 13.4 5.2S19.8 7.8 19.8 12.2V14.6C19.8 17.8 21.2 19.6 23.4 21.8Z" fill="none" stroke="#7b8996" stroke-width="2.5" stroke-linejoin="round"/><circle cx="13.4" cy="3.9" r="1.5" fill="#7b8996"/><path d="M9.6 25.4H17.2Q13.4 30.4 9.6 25.4Z" fill="#7b8996"/></svg>
</div>
<div class="a row" style="top:1300px">
<div class="a cb" style="left:18px;top:24px"></div>
<span class="t" style="left:99.80px;top:28.19px;font-size:27px;color:#0a84ff;letter-spacing:0.004px;-webkit-text-stroke:0.5px #0a84ff;">78f785e7-7e84-4bea-a389-bd5...</span>
<span class="t" style="left:591.00px;top:28.44px;font-size:27px;color:#262626;letter-spacing:0.350px;">logstream-corp-stream-logstr...</span>
<svg class="a ck" style="left:1098px;top:28.80000000000001px" width="23" height="23" viewBox="0 0 23 23"><rect x="0" y="0" width="22.8" height="22.8" rx="2.6" fill="#0ac70f"/><path d="M4.6 11.6L9.6 16L18.2 7.2" fill="none" stroke="#fff" stroke-width="3.6" stroke-linecap="butt" stroke-linejoin="miter"/></svg>
<span class="t" style="left:1130.60px;top:28.44px;font-size:27px;color:#262626;letter-spacing:-0.400px;">Alive</span>
<span class="t" style="left:1326.20px;top:28.44px;font-size:27px;color:#1890ff;letter-spacing:-1.700px;">Java</span>
<span class="t" style="left:1513.00px;top:28.44px;font-size:27px;color:#262626;letter-spacing:-0.222px;">2022-03-26 21:24:33</span>
<span class="t" style="left:1853.20px;top:28.44px;font-size:27px;color:#262626;letter-spacing:-0.261px;">2022-03-27 20:33:20</span>
<svg class="a ck" style="left:2200px;top:28.80000000000001px" width="23" height="23" viewBox="0 0 23 23"><rect x="0" y="0" width="22.8" height="22.8" rx="2.6" fill="#0ac70f"/><path d="M4.6 11.6L9.6 16L18.2 7.2" fill="none" stroke="#fff" stroke-width="3.6" stroke-linecap="butt" stroke-linejoin="miter"/></svg>
<span class="t" style="left:2231.60px;top:28.44px;font-size:27px;color:#262626;letter-spacing:-0.050px;">6685907</span>
<span class="t" style="left:2452.80px;top:28.44px;font-size:27px;color:#262626;">3.3.0-faf30f7a</span>
<svg class="a" style="left:2750px;top:25px" width="27" height="30" viewBox="0 0 27 30"><path d="M3.4 21.8C5.6 19.6 7 17.8 7 14.6V12.2C7 7.8 9.6 5.2 13.4 5.2S19.8 7.8 19.8 12.2V14.6C19.8 17.8 21.2 19.6 23.4 21.8Z" fill="none" stroke="#7b8996" stroke-width="2.5" stroke-linejoin="round"/><circle cx="13.4" cy="3.9" r="1.5" fill="#7b8996"/><path d="M9.6 25.4H17.2Q13.4 30.4 9.6 25.4Z" fill="#7b8996"/></svg>
</div>
<div class="a row" style="top:1380px">
<div class="a cb" style="left:18px;top:24px"></div>
<span class="t" style="left:99.80px;top:28.19px;font-size:27px;color:#0a84ff;letter-spacing:0.004px;-webkit-text-stroke:0.5px #0a84ff;">78f785e7-7e84-4bea-a389-bd5...</span>
<span class="t" style="left:591.00px;top:28.44px;font-size:27px;color:#262626;letter-spacing:0.350px;">logstream-corp-stream-logstr...</span>
<svg class="a ck" style="left:1098px;top:28.80000000000001px" width="23" height="23" viewBox="0 0 23 23"><rect x="0" y="0" width="22.8" height="22.8" rx="2.6" fill="#0ac70f"/><path d="M4.6 11.6L9.6 16L18.2 7.2" fill="none" stroke="#fff" stroke-width="3.6" stroke-linecap="butt" stroke-linejoin="miter"/></svg>
<span class="t" style="left:1130.60px;top:28.44px;font-size:27px;color:#262626;letter-spacing:-0.400px;">Alive</span>
<span class="t" style="left:1326.20px;top:28.44px;font-size:27px;color:#1890ff;letter-spacing:-1.700px;">Java</span>
<span class="t" style="left:1513.00px;top:28.44px;font-size:27px;color:#262626;letter-spacing:-0.222px;">2022-03-26 21:24:33</span>
<span class="t" style="left:1853.20px;top:28.44px;font-size:27px;color:#262626;letter-spacing:-0.261px;">2022-03-27 20:33:20</span>
<svg class="a ck" style="left:2200px;top:28.80000000000001px" width="23" height="23" viewBox="0 0 23 23"><rect x="0" y="0" width="22.8" height="22.8" rx="2.6" fill="#0ac70f"/><path d="M4.6 11.6L9.6 16L18.2 7.2" fill="none" stroke="#fff" stroke-width="3.6" stroke-linecap="butt" stroke-linejoin="miter"/></svg>
<span class="t" style="left:2231.60px;top:28.44px;font-size:27px;color:#262626;letter-spacing:-0.050px;">6685907</span>
<span class="t" style="left:2452.80px;top:28.44px;font-size:27px;color:#262626;">3.3.0-faf30f7a</span>
<svg class="a" style="left:2750px;top:25px" width="27" height="30" viewBox="0 0 27 30"><path d="M3.4 21.8C5.6 19.6 7 17.8 7 14.6V12.2C7 7.8 9.6 5.2 13.4 5.2S19.8 7.8 19.8 12.2V14.6C19.8 17.8 21.2 19.6 23.4 21.8Z" fill="none" stroke="#7b8996" stroke-width="2.5" stroke-linejoin="round"/><circle cx="13.4" cy="3.9" r="1.5" fill="#7b8996"/><path d="M9.6 25.4H17.2Q13.4 30.4 9.6 25.4Z" fill="#7b8996"/></svg>
</div>
<div class="a row" style="top:1460px">
<div class="a cb" style="left:18px;top:24px"></div>
<span class="t" style="left:99.80px;top:28.19px;font-size:27px;color:#0a84ff;letter-spacing:0.004px;-webkit-text-stroke:0.5px #0a84ff;">78f785e7-7e84-4bea-a389-bd5...</span>
<span class="t" style="left:591.00px;top:28.44px;font-size:27px;color:#262626;letter-spacing:0.350px;">logstream-corp-stream-logstr...</span>
<svg class="a ck" style="left:1098px;top:28.80000000000001px" width="23" height="23" viewBox="0 0 23 23"><rect x="0" y="0" width="22.8" height="22.8" rx="2.6" fill="#0ac70f"/><path d="M4.6 11.6L9.6 16L18.2 7.2" fill="none" stroke="#fff" stroke-width="3.6" stroke-linecap="butt" stroke-linejoin="miter"/></svg>
<span class="t" style="left:1130.60px;top:28.44px;font-size:27px;color:#262626;letter-spacing:-0.400px;">Alive</span>
<span class="t" style="left:1326.20px;top:28.44px;font-size:27px;color:#1890ff;letter-spacing:-1.700px;">Java</span>
<span class="t" style="left:1513.00px;top:28.44px;font-size:27px;color:#262626;letter-spacing:-0.222px;">2022-03-26 21:24:33</span>
<span class="t" style="left:1853.20px;top:28.44px;font-size:27px;color:#262626;letter-spacing:-0.261px;">2022-03-27 20:33:20</span>
<svg class="a ck" style="left:2200px;top:28.80000000000001px" width="23" height="23" viewBox="0 0 23 23"><rect x="0" y="0" width="22.8" height="22.8" rx="2.6" fill="#0ac70f"/><path d="M4.6 11.6L9.6 16L18.2 7.2" fill="none" stroke="#fff" stroke-width="3.6" stroke-linecap="butt" stroke-linejoin="miter"/></svg>
<span class="t" style="left:2231.60px;top:28.44px;font-size:27px;color:#262626;letter-spacing:-0.050px;">6685907</span>
<span class="t" style="left:2452.80px;top:28.44px;font-size:27px;color:#262626;">3.3.0-faf30f7a</span>
<svg class="a" style="left:2750px;top:25px" width="27" height="30" viewBox="0 0 27 30"><path d="M3.4 21.8C5.6 19.6 7 17.8 7 14.6V12.2C7 7.8 9.6 5.2 13.4 5.2S19.8 7.8 19.8 12.2V14.6C19.8 17.8 21.2 19.6 23.4 21.8Z" fill="none" stroke="#7b8996" stroke-width="2.5" stroke-linejoin="round"/><circle cx="13.4" cy="3.9" r="1.5" fill="#7b8996"/><path d="M9.6 25.4H17.2Q13.4 30.4 9.6 25.4Z" fill="#7b8996"/></svg>
</div>
<div class="a row" style="top:1540px">
<div class="a cb" style="left:18px;top:24px"></div>
<span class="t" style="left:99.80px;top:28.19px;font-size:27px;color:#0a84ff;letter-spacing:0.004px;-webkit-text-stroke:0.5px #0a84ff;">78f785e7-7e84-4bea-a389-bd5...</span>
<span class="t" style="left:591.00px;top:28.44px;font-size:27px;color:#262626;letter-spacing:0.350px;">logstream-corp-stream-logstr...</span>
<svg class="a ck" style="left:1098px;top:28.80000000000001px" width="23" height="23" viewBox="0 0 23 23"><rect x="0" y="0" width="22.8" height="22.8" rx="2.6" fill="#0ac70f"/><path d="M4.6 11.6L9.6 16L18.2 7.2" fill="none" stroke="#fff" stroke-width="3.6" stroke-linecap="butt" stroke-linejoin="miter"/></svg>
<span class="t" style="left:1130.60px;top:28.44px;font-size:27px;color:#262626;letter-spacing:-0.400px;">Alive</span>
<span class="t" style="left:1326.20px;top:28.44px;font-size:27px;color:#1890ff;letter-spacing:-1.700px;">Java</span>
<span class="t" style="left:1513.00px;top:28.44px;font-size:27px;color:#262626;letter-spacing:-0.222px;">2022-03-26 21:24:33</span>
<span class="t" style="left:1853.20px;top:28.44px;font-size:27px;color:#262626;letter-spacing:-0.261px;">2022-03-27 20:33:20</span>
<svg class="a ck" style="left:2200px;top:28.80000000000001px" width="23" height="23" viewBox="0 0 23 23"><rect x="0" y="0" width="22.8" height="22.8" rx="2.6" fill="#0ac70f"/><path d="M4.6 11.6L9.6 16L18.2 7.2" fill="none" stroke="#fff" stroke-width="3.6" stroke-linecap="butt" stroke-linejoin="miter"/></svg>
<span class="t" style="left:2231.60px;top:28.44px;font-size:27px;color:#262626;letter-spacing:-0.050px;">6685907</span>
<span class="t" style="left:2452.80px;top:28.44px;font-size:27px;color:#262626;">3.3.0-faf30f7a</span>
<svg class="a" style="left:2750px;top:25px" width="27" height="30" viewBox="0 0 27 30"><path d="M3.4 21.8C5.6 19.6 7 17.8 7 14.6V12.2C7 7.8 9.6 5.2 13.4 5.2S19.8 7.8 19.8 12.2V14.6C19.8 17.8 21.2 19.6 23.4 21.8Z" fill="none" stroke="#7b8996" stroke-width="2.5" stroke-linejoin="round"/><circle cx="13.4" cy="3.9" r="1.5" fill="#7b8996"/><path d="M9.6 25.4H17.2Q13.4 30.4 9.6 25.4Z" fill="#7b8996"/></svg>
</div>
<div class="a row" style="top:1620px">
<div class="a cb" style="left:18px;top:24px"></div>
<span class="t" style="left:99.80px;top:28.19px;font-size:27px;color:#0a84ff;letter-spacing:0.004px;-webkit-text-stroke:0.5px #0a84ff;">78f785e7-7e84-4bea-a389-bd5...</span>
<span class="t" style="left:591.00px;top:28.44px;font-size:27px;color:#262626;letter-spacing:0.350px;">logstream-corp-stream-logstr...</span>
<svg class="a ck" style="left:1098px;top:28.80000000000001px" width="23" height="23" viewBox="0 0 23 23"><rect x="0" y="0" width="22.8" height="22.8" rx="2.6" fill="#0ac70f"/><path d="M4.6 11.6L9.6 16L18.2 7.2" fill="none" stroke="#fff" stroke-width="3.6" stroke-linecap="butt" stroke-linejoin="miter"/></svg>
<span class="t" style="left:1130.60px;top:28.44px;font-size:27px;color:#262626;letter-spacing:-0.400px;">Alive</span>
<span class="t" style="left:1326.20px;top:28.44px;font-size:27px;color:#1890ff;letter-spacing:-1.700px;">Java</span>
<span class="t" style="left:1513.00px;top:28.44px;font-size:27px;color:#262626;letter-spacing:-0.222px;">2022-03-26 21:24:33</span>
<span class="t" style="left:1853.20px;top:28.44px;font-size:27px;color:#262626;letter-spacing:-0.261px;">2022-03-27 20:33:20</span>
<svg class="a ck" style="left:2200px;top:28.80000000000001px" width="23" height="23" viewBox="0 0 23 23"><rect x="0" y="0" width="22.8" height="22.8" rx="2.6" fill="#0ac70f"/><path d="M4.6 11.6L9.6 16L18.2 7.2" fill="none" stroke="#fff" stroke-width="3.6" stroke-linecap="butt" stroke-linejoin="miter"/></svg>
<span class="t" style="left:2231.60px;top:28.44px;font-size:27px;color:#262626;letter-spacing:-0.050px;">6685907</span>
<span class="t" style="left:2452.80px;top:28.44px;font-size:27px;color:#262626;">3.3.0-faf30f7a</span>
<svg class="a" style="left:2750px;top:25px" width="27" height="30" viewBox="0 0 27 30"><path d="M3.4 21.8C5.6 19.6 7 17.8 7 14.6V12.2C7 7.8 9.6 5.2 13.4 5.2S19.8 7.8 19.8 12.2V14.6C19.8 17.8 21.2 19.6 23.4 21.8Z" fill="none" stroke="#7b8996" stroke-width="2.5" stroke-linejoin="round"/><circle cx="13.4" cy="3.9" r="1.5" fill="#7b8996"/><path d="M9.6 25.4H17.2Q13.4 30.4 9.6 25.4Z" fill="#7b8996"/></svg>
</div>
<div class="a row" style="top:1700px">
<div class="a cb" style="left:18px;top:24px"></div>
<span class="t" style="left:99.80px;top:28.19px;font-size:27px;color:#0a84ff;letter-spacing:0.004px;-webkit-text-stroke:0.5px #0a84ff;">78f785e7-7e84-4bea-a389-bd5...</span>
<span class="t" style="left:591.00px;top:28.44px;font-size:27px;color:#262626;letter-spacing:0.350px;">logstream-corp-stream-logstr...</span>
<svg class="a ck" style="left:1098px;top:28.80000000000001px" width="23" height="23" viewBox="0 0 23 23"><rect x="0" y="0" width="22.8" height="22.8" rx="2.6" fill="#0ac70f"/><path d="M4.6 11.6L9.6 16L18.2 7.2" fill="none" stroke="#fff" stroke-width="3.6" stroke-linecap="butt" stroke-linejoin="miter"/></svg>
<span class="t" style="left:1130.60px;top:28.44px;font-size:27px;color:#262626;letter-spacing:-0.400px;">Alive</span>
<span class="t" style="left:1326.20px;top:28.44px;font-size:27px;color:#1890ff;letter-spacing:-1.700px;">Java</span>
<span class="t" style="left:1513.00px;top:28.44px;font-size:27px;color:#262626;letter-spacing:-0.222px;">2022-03-26 21:24:33</span>
<span class="t" style="left:1853.20px;top:28.44px;font-size:27px;color:#262626;letter-spacing:-0.261px;">2022-03-27 20:33:20</span>
<svg class="a ck" style="left:2200px;top:28.80000000000001px" width="23" height="23" viewBox="0 0 23 23"><rect x="0" y="0" width="22.8" height="22.8" rx="2.6" fill="#0ac70f"/><path d="M4.6 11.6L9.6 16L18.2 7.2" fill="none" stroke="#fff" stroke-width="3.6" stroke-linecap="butt" stroke-linejoin="miter"/></svg>
<span class="t" style="left:2231.60px;top:28.44px;font-size:27px;color:#262626;letter-spacing:-0.050px;">6685907</span>
<span class="t" style="left:2452.80px;top:28.44px;font-size:27px;color:#262626;">3.3.0-faf30f7a</span>
<svg class="a" style="left:2750px;top:25px" width="27" height="30" viewBox="0 0 27 30"><path d="M3.4 21.8C5.6 19.6 7 17.8 7 14.6V12.2C7 7.8 9.6 5.2 13.4 5.2S19.8 7.8 19.8 12.2V14.6C19.8 17.8 21.2 19.6 23.4 21.8Z" fill="none" stroke="#7b8996" stroke-width="2.5" stroke-linejoin="round"/><circle cx="13.4" cy="3.9" r="1.5" fill="#7b8996"/><path d="M9.6 25.4H17.2Q13.4 30.4 9.6 25.4Z" fill="#7b8996"/></svg>
</div>
<div class="a row" style="top:1780px">
<div class="a cb" style="left:18px;top:24px"></div>
<span class="t" style="left:99.80px;top:28.19px;font-size:27px;color:#0a84ff;letter-spacing:0.004px;-webkit-text-stroke:0.5px #0a84ff;">78f785e7-7e84-4bea-a389-bd5...</span>
<span class="t" style="left:591.00px;top:28.44px;font-size:27px;color:#262626;letter-spacing:0.350px;">logstream-corp-stream-logstr...</span>
<svg class="a ck" style="left:1098px;top:28.80000000000001px" width="23" height="23" viewBox="0 0 23 23"><rect x="0" y="0" width="22.8" height="22.8" rx="2.6" fill="#0ac70f"/><path d="M4.6 11.6L9.6 16L18.2 7.2" fill="none" stroke="#fff" stroke-width="3.6" stroke-linecap="butt" stroke-linejoin="miter"/></svg>
<span class="t" style="left:1130.60px;top:28.44px;font-size:27px;color:#262626;letter-spacing:-0.400px;">Alive</span>
<span class="t" style="left:1326.20px;top:28.44px;font-size:27px;color:#1890ff;letter-spacing:-1.700px;">Java</span>
<span class="t" style="left:1513.00px;top:28.44px;font-size:27px;color:#262626;letter-spacing:-0.222px;">2022-03-26 21:24:33</span>
<span class="t" style="left:1853.20px;top:28.44px;font-size:27px;color:#262626;letter-spacing:-0.261px;">2022-03-27 20:33:20</span>
<svg class="a ck" style="left:2200px;top:28.80000000000001px" width="23" height="23" viewBox="0 0 23 23"><rect x="0" y="0" width="22.8" height="22.8" rx="2.6" fill="#0ac70f"/><path d="M4.6 11.6L9.6 16L18.2 7.2" fill="none" stroke="#fff" stroke-width="3.6" stroke-linecap="butt" stroke-linejoin="miter"/></svg>
<span class="t" style="left:2231.60px;top:28.44px;font-size:27px;color:#262626;letter-spacing:-0.050px;">6685907</span>
<span class="t" style="left:2452.80px;top:28.44px;font-size:27px;color:#262626;">3.3.0-faf30f7a</span>
<svg class="a" style="left:2750px;top:25px" width="27" height="30" viewBox="0 0 27 30"><path d="M3.4 21.8C5.6 19.6 7 17.8 7 14.6V12.2C7 7.8 9.6 5.2 13.4 5.2S19.8 7.8 19.8 12.2V14.6C19.8 17.8 21.2 19.6 23.4 21.8Z" fill="none" stroke="#7b8996" stroke-width="2.5" stroke-linejoin="round"/><circle cx="13.4" cy="3.9" r="1.5" fill="#7b8996"/><path d="M9.6 25.4H17.2Q13.4 30.4 9.6 25.4Z" fill="#7b8996"/></svg>
</div>
<div class="a row" style="top:1860px">
<div class="a cb" style="left:18px;top:24px"></div>
<span class="t" style="left:99.80px;top:28.19px;font-size:27px;color:#0a84ff;letter-spacing:0.004px;-webkit-text-stroke:0.5px #0a84ff;">78f785e7-7e84-4bea-a389-bd5...</span>
<span class="t" style="left:591.00px;top:28.44px;font-size:27px;color:#262626;letter-spacing:0.350px;">logstream-corp-stream-logstr...</span>
<svg class="a ck" style="left:1098px;top:28.80000000000001px" width="23" height="23" viewBox="0 0 23 23"><rect x="0" y="0" width="22.8" height="22.8" rx="2.6" fill="#0ac70f"/><path d="M4.6 11.6L9.6 16L18.2 7.2" fill="none" stroke="#fff" stroke-width="3.6" stroke-linecap="butt" stroke-linejoin="miter"/></svg>
<span class="t" style="left:1130.60px;top:28.44px;font-size:27px;color:#262626;letter-spacing:-0.400px;">Alive</span>
<span class="t" style="left:1326.20px;top:28.44px;font-size:27px;color:#1890ff;letter-spacing:-1.700px;">Java</span>
<span class="t" style="left:1513.00px;top:28.44px;font-size:27px;color:#262626;letter-spacing:-0.222px;">2022-03-26 21:24:33</span>
<span class="t" style="left:1853.20px;top:28.44px;font-size:27px;color:#262626;letter-spacing:-0.261px;">2022-03-27 20:33:20</span>
<svg class="a ck" style="left:2200px;top:28.80000000000001px" width="23" height="23" viewBox="0 0 23 23"><rect x="0" y="0" width="22.8" height="22.8" rx="2.6" fill="#0ac70f"/><path d="M4.6 11.6L9.6 16L18.2 7.2" fill="none" stroke="#fff" stroke-width="3.6" stroke-linecap="butt" stroke-linejoin="miter"/></svg>
<span class="t" style="left:2231.60px;top:28.44px;font-size:27px;color:#262626;letter-spacing:-0.050px;">6685907</span>
<span class="t" style="left:2452.80px;top:28.44px;font-size:27px;color:#262626;">3.3.0-faf30f7a</span>
<svg class="a" style="left:2750px;top:25px" width="27" height="30" viewBox="0 0 27 30"><path d="M3.4 21.8C5.6 19.6 7 17.8 7 14.6V12.2C7 7.8 9.6 5.2 13.4 5.2S19.8 7.8 19.8 12.2V14.6C19.8 17.8 21.2 19.6 23.4 21.8Z" fill="none" stroke="#7b8996" stroke-width="2.5" stroke-linejoin="round"/><circle cx="13.4" cy="3.9" r="1.5" fill="#7b8996"/><path d="M9.6 25.4H17.2Q13.4 30.4 9.6 25.4Z" fill="#7b8996"/></svg>
</div>
<div class="a row" style="top:1940px">
<div class="a cb" style="left:18px;top:24px"></div>
<span class="t" style="left:99.80px;top:28.19px;font-size:27px;color:#0a84ff;letter-spacing:0.004px;-webkit-text-stroke:0.5px #0a84ff;">78f785e7-7e84-4bea-a389-bd5...</span>
<span class="t" style="left:591.00px;top:28.44px;font-size:27px;color:#262626;letter-spacing:0.350px;">logstream-corp-stream-logstr...</span>
<svg class="a ck" style="left:1098px;top:28.80000000000001px" width="23" height="23" viewBox="0 0 23 23"><rect x="0" y="0" width="22.8" height="22.8" rx="2.6" fill="#0ac70f"/><path d="M4.6 11.6L9.6 16L18.2 7.2" fill="none" stroke="#fff" stroke-width="3.6" stroke-linecap="butt" stroke-linejoin="miter"/></svg>
<span class="t" style="left:1130.60px;top:28.44px;font-size:27px;color:#262626;letter-spacing:-0.400px;">Alive</span>
<span class="t" style="left:1326.20px;top:28.44px;font-size:27px;color:#1890ff;letter-spacing:-1.700px;">Java</span>
<span class="t" style="left:1513.00px;top:28.44px;font-size:27px;color:#262626;letter-spacing:-0.222px;">2022-03-26 21:24:33</span>
<span class="t" style="left:1853.20px;top:28.44px;font-size:27px;color:#262626;letter-spacing:-0.261px;">2022-03-27 20:33:20</span>
<svg class="a ck" style="left:2200px;top:28.80000000000001px" width="23" height="23" viewBox="0 0 23 23"><rect x="0" y="0" width="22.8" height="22.8" rx="2.6" fill="#0ac70f"/><path d="M4.6 11.6L9.6 16L18.2 7.2" fill="none" stroke="#fff" stroke-width="3.6" stroke-linecap="butt" stroke-linejoin="miter"/></svg>
<span class="t" style="left:2231.60px;top:28.44px;font-size:27px;color:#262626;letter-spacing:-0.050px;">6685907</span>
<span class="t" style="left:2452.80px;top:28.44px;font-size:27px;color:#262626;">3.3.0-faf30f7a</span>
<svg class="a" style="left:2750px;top:25px" width="27" height="30" viewBox="0 0 27 30"><path d="M3.4 21.8C5.6 19.6 7 17.8 7 14.6V12.2C7 7.8 9.6 5.2 13.4 5.2S19.8 7.8 19.8 12.2V14.6C19.8 17.8 21.2 19.6 23.4 21.8Z" fill="none" stroke="#7b8996" stroke-width="2.5" stroke-linejoin="round"/><circle cx="13.4" cy="3.9" r="1.5" fill="#7b8996"/><path d="M9.6 25.4H17.2Q13.4 30.4 9.6 25.4Z" fill="#7b8996"/></svg>
</div>
</body></html>
